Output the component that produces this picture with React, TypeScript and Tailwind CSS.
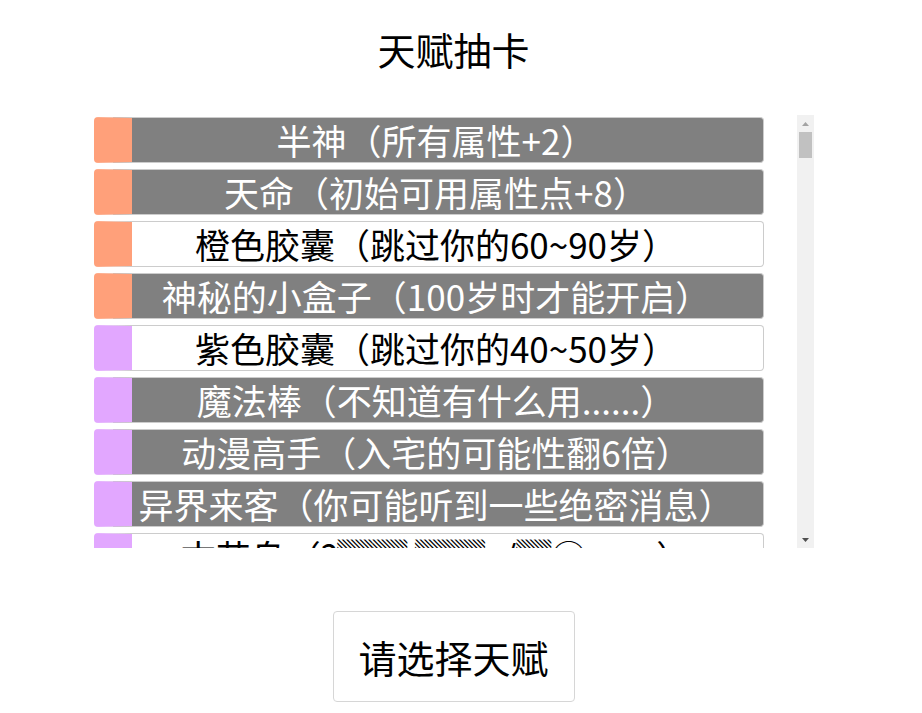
import React from 'react';

type Talent = { name: string; grade: 2 | 3; selected?: boolean };

const talents: Talent[] = [
  { name: '半神（所有属性+2）', grade: 3, selected: true },
  { name: '天命（初始可用属性点+8）', grade: 3, selected: true },
  { name: '橙色胶囊（跳过你的60~90岁）', grade: 3 },
  { name: '神秘的小盒子（100岁时才能开启）', grade: 3, selected: true },
  { name: '紫色胶囊（跳过你的40~50岁）', grade: 2 },
  { name: '魔法棒（不知道有什么用......）', grade: 2, selected: true },
  { name: '动漫高手（入宅的可能性翻6倍）', grade: 2, selected: true },
  { name: '异界来客（你可能听到一些绝密消息）', grade: 2, selected: true },
  { name: '古艾鸟（?▓▓ ▓▓v/▓◯　　）', grade: 2 },
];

// filler rows below the fold
const filler = [
  '天赋异禀（智力+2）',
  '人类进化（体质+2）',
  '家中老大（家境+1）',
  '乐天派（快乐+1）',
  '白化病（颜值-2，寿命减少）',
  '宝宝饥渴症（更容易生孩子）',
  '神仙眷侣（更容易找到对象）',
  '网络成瘾（体质-1）',
];
const rest: Talent[] = Array.from({ length: 110 }, (_, i) => ({
  name: filler[i % filler.length],
  grade: 2,
}));

const TalentRow = ({ t }: { t: Talent }) => (
  <div
    className={`mb-[6px] flex h-[46px] w-[670px] shrink-0 items-center justify-center overflow-hidden rounded-[4px] border border-[#cccccc] border-l-[38px] pr-[22px] text-[35px] leading-[44px] whitespace-nowrap ${
      t.grade === 3 ? 'border-l-[#ffa07a]' : 'border-l-[#e2a7ff]'
    } ${t.selected ? 'bg-[#808080] text-white' : 'bg-white text-black'}`}
  >
    {t.name}
  </div>
);

// the browser hides its own scrollbar, so draw the classic one beside the list
const ScrollBar = () => (
  <div className="flex w-[17px] flex-col bg-[#f1f1f1]">
    <div className="flex h-[17px] items-center justify-center">
      <svg width="7" height="4" viewBox="0 0 7 4">
        <path d="M3.5 0L7 4H0z" fill="#a3a3a3" />
      </svg>
    </div>
    <div className="mx-[2px] h-[26px] bg-[#c1c1c1]" />
    <div className="flex-1" />
    <div className="flex h-[17px] items-center justify-center">
      <svg width="7" height="4" viewBox="0 0 7 4">
        <path d="M0 0H7L3.5 4z" fill="#505050" />
      </svg>
    </div>
  </div>
);

export default function App() {
  return (
    <div className="flex w-[907px] flex-col items-center bg-white font-['Noto_Sans_CJK_SC',sans-serif] text-black">
      <h1 className="mt-5 text-[38px] leading-[57px] font-normal">天赋抽卡</h1>
      <div className="mt-[38px] flex h-[433px] w-[720px]">
        <div className="flex flex-1 flex-col overflow-y-auto pt-[2px] [scrollbar-width:none]">
          {talents.concat(rest).map((t, i) => (
            <TalentRow key={i} t={t} />
          ))}
        </div>
        <ScrollBar />
      </div>
      <button className="mt-[63px] h-[91px] w-[242px] rounded-[4px] border border-[#d6d6d6] bg-white text-[38px] leading-none text-black">
        请选择天赋
      </button>
    </div>
  );
}
